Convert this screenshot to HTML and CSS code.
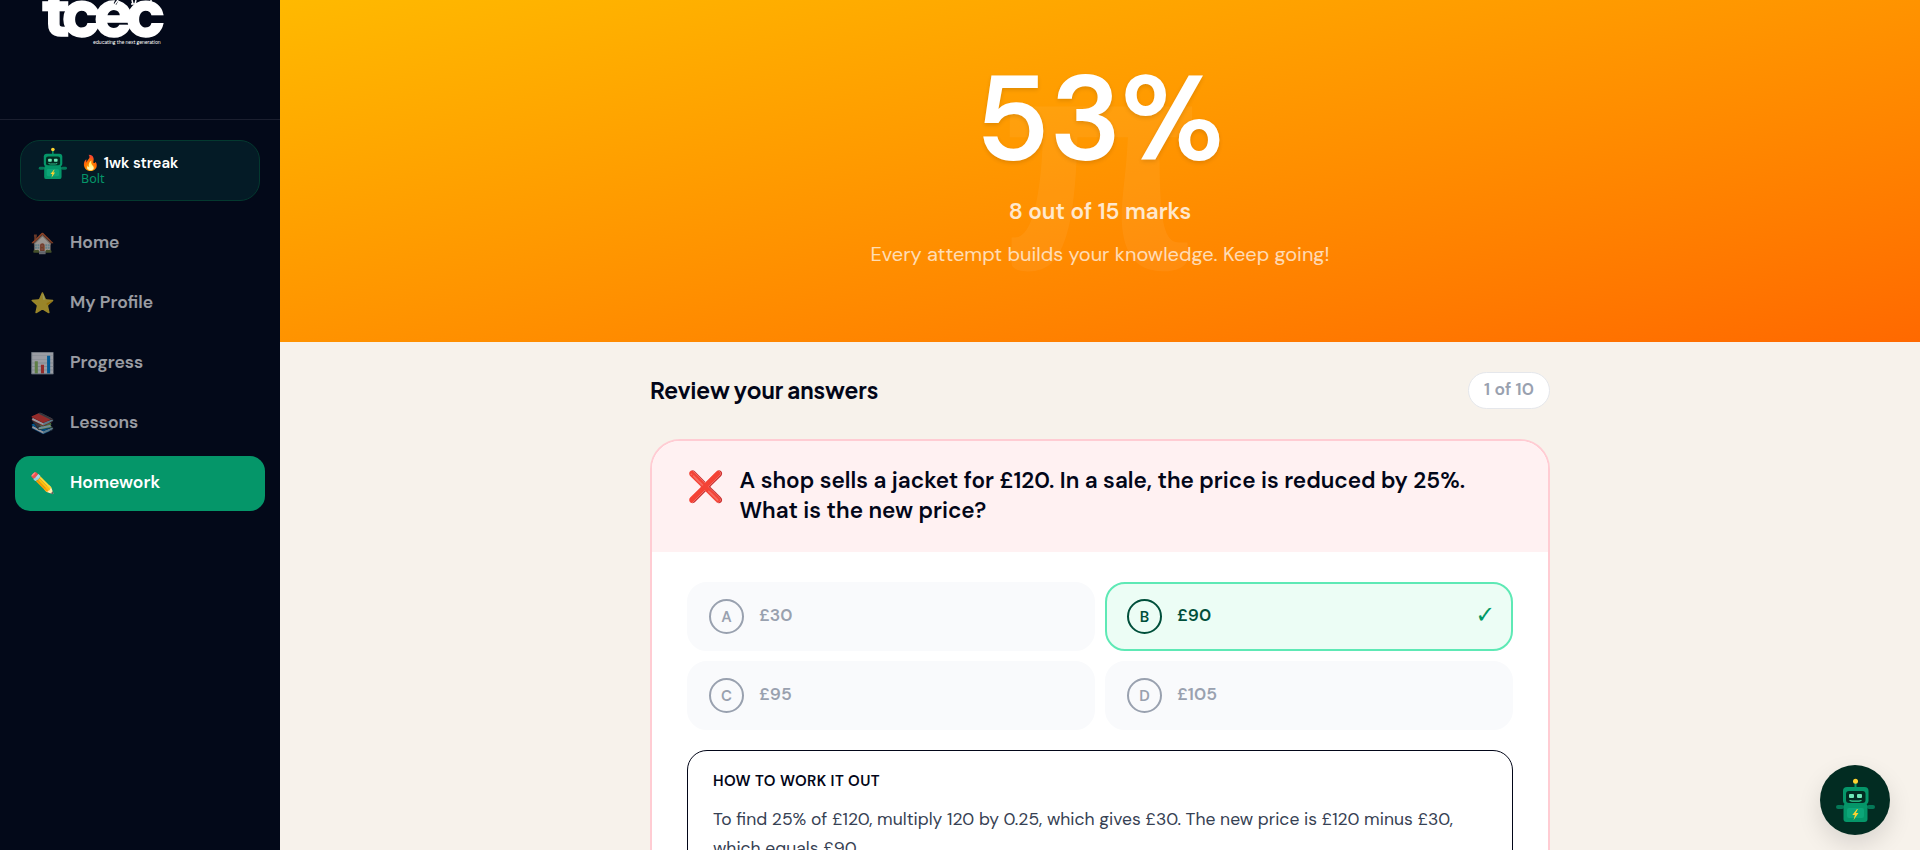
FILE: index.html
```
<!DOCTYPE html>
<html lang="en">
<head>
    <meta charset="UTF-8">
    <meta name="viewport" content="width=device-width, initial-scale=1.0">
    <title>Homework Results</title>
    <link rel="stylesheet" href="styles.css">
</head>
<body>
    <!-- Robot mascot, used in the sidebar and the chat button -->
    <svg class="sprite" width="0" height="0">
        <symbol id="robot" viewBox="0 0 40 45">
            <rect x="19.5" y="4" width="2" height="6" fill="#059669"/>
            <circle cx="20.5" cy="3.2" r="2.5" fill="#ffd230"/>
            <rect x="1" y="27" width="8" height="4" rx="2" fill="#047857"/>
            <rect x="32" y="27" width="8" height="4" rx="2" fill="#047857"/>
            <rect x="8.500" y="25.500" width="24" height="18.500" rx="3" fill="#059669"/>
            <rect x="12" y="30" width="17" height="10" rx="2" fill="#0ca678"/>
            <rect x="8" y="9" width="25.500" height="17.500" rx="4" fill="#059669"/>
            <rect x="11" y="13" width="19.500" height="12" rx="3" fill="#022c22"/>
            <rect x="14" y="16" width="5" height="4" rx="1" fill="#6ee7b7"/>
            <rect x="22" y="16" width="5" height="4" rx="1" fill="#6ee7b7"/>
            <path d="M14.500 22.500l2.500 .7h7l2.500-.7" fill="none" stroke="#34d399" stroke-width="1.2"/>
            <path d="M22 31l-4.700 6h2.600l-1.300 5 4.900-7h-2.600l2-4z" fill="#ffd230"/>
        </symbol>
    </svg>

    <div class="layout">
        <aside class="sidebar">
            <div class="logo">
                <div class="logo-word">tcec</div>
                <svg class="logo-marks" width="44" height="6">
                    <path d="M6 0l-2 4" stroke="#030919" stroke-width="3"/>
                    <path d="M7 0l-3 4M21 0l1 4M25 0l-1 4M20 4h4M40 0v2" stroke="white" stroke-width="1.500"/>
                </svg>
                <div class="logo-tag">educating the next generation</div>
            </div>
            <div class="streak">
                <svg class="streak-robot"><use href="#robot"/></svg>
                <div>
                    <div class="streak-title"><span class="flame">🔥</span> 1wk streak</div>
                    <div class="streak-name">Bolt</div>
                </div>
            </div>
            <nav class="nav">
                <a class="nav-item"><span class="nav-icon">🏠</span><span class="nav-label">Home</span></a>
                <a class="nav-item"><span class="nav-icon">⭐</span><span class="nav-label">My Profile</span></a>
                <a class="nav-item"><span class="nav-icon">📊</span><span class="nav-label">Progress</span></a>
                <a class="nav-item"><span class="nav-icon">📚</span><span class="nav-label">Lessons</span></a>
                <a class="nav-item active"><span class="nav-icon">✏️</span><span class="nav-label">Homework</span></a>
            </nav>
        </aside>

        <main class="main">
            <section class="hero">
                <div class="hero-symbol">π</div>
                <div class="score">53%</div>
                <div class="marks">8 out of 15 marks</div>
                <div class="message">Every attempt builds your knowledge. Keep going!</div>
            </section>

            <section class="review">
                <div class="review-head">
                    <h2>Review your answers</h2>
                    <span class="counter">1 of 10</span>
                </div>

                <div class="card">
                    <div class="question">
                        <span class="question-icon">❌</span>
                        <p class="question-text">A shop sells a jacket for £120. In a sale, the price is reduced by 25%. What is the new price?</p>
                    </div>
                    <div class="card-body">
                        <div class="options">
                            <div class="option"><span class="letter">A</span><span class="value">£30</span></div>
                            <div class="option correct"><span class="letter">B</span><span class="value">£90</span><span class="tick">✓</span></div>
                            <div class="option"><span class="letter">C</span><span class="value">£95</span></div>
                            <div class="option"><span class="letter">D</span><span class="value">£105</span></div>
                        </div>
                        <div class="explain">
                            <h3>How to work it out</h3>
                            <p>To find 25% of £120, multiply 120 by 0.25, which gives £30. The new price is £120 minus £30, which equals £90.</p>
                        </div>
                    </div>
                </div>
            </section>
        </main>
    </div>

    <button class="chat-button"><svg><use href="#robot"/></svg></button>
</body>
</html>
```
FILE: styles.css
```
* {
    box-sizing: border-box;
}

body {
    margin: 0;
    height: 100vh;
    overflow: hidden;
    font-family: "DM Sans", sans-serif;
    background-color: #f7f2eb;
    color: #020618;
}

h2, h3, p {
    margin: 0;
}

.sprite {
    position: absolute;
}

.layout {
    display: flex;
    height: 850px;
}

/* Sidebar */
.sidebar {
    flex: none;
    width: 280px;
    background-color: #030919;
    overflow: hidden;
}

.logo {
    position: relative;
    height: 120px;
    padding-left: 41px;
    border-bottom: 1px solid #1b1f2f;
    color: white;
}

.logo-word {
    height: 40px;
    line-height: 27px;
    font-size: 67px;
    font-weight: 900;
    letter-spacing: -9.2px;
    -webkit-text-stroke: 1.5px white;
}

.logo-marks {
    position: absolute;
    top: 0;
    left: 111px;
}

.logo-tag {
    padding-left: 52px;
    font-size: 5px;
    line-height: 6px;
    letter-spacing: -0.07px;
    white-space: nowrap;
}

.streak {
    display: flex;
    margin: 20px 20px 15px;
    height: 61px;
    padding: 6px 17px;
    border: 1px solid #04392f;
    border-radius: 20px;
    background-color: #041b26;
}

.streak-robot {
    width: 29px;
    height: 33px;
    margin-right: 14px;
}

.streak-title {
    margin-top: 6px;
    font-size: 15px;
    line-height: 20px;
    font-weight: 600;
    color: white;
}

.streak-name {
    font-family: "Noto Sans", sans-serif;
    font-size: 12.5px;
    line-height: 12px;
    color: #059669;
}

.nav {
    display: flex;
    flex-direction: column;
    gap: 5px;
    padding: 0 15px;
}

.nav-item {
    display: flex;
    align-items: center;
    gap: 15px;
    height: 55px;
    padding-left: 15px;
    border-radius: 15px;
    font-size: 17.5px;
    font-weight: 600;
    color: white;
}

.nav-icon {
    width: 25px;
    font-size: 20px;
    line-height: 24px;
    margin-top: -1px;
    opacity: 0.6;
}

.nav-label {
    margin-top: -3px;
    opacity: 0.6;
}

.active {
    background-color: #059669;
}

.active span {
    opacity: 1;
}

/* Score banner */
.main {
    flex: 1;
    overflow: hidden;
}

.hero {
    position: relative;
    height: 342px;
    padding-top: 60px;
    text-align: center;
    color: white;
    background: linear-gradient(to bottom right in oklab, #ffb900, #ff6900);
}

.hero-symbol {
    position: absolute;
    top: 0;
    left: 0;
    width: 100%;
    line-height: 292px;
    font-family: Lato, sans-serif;
    font-size: 320px;
    font-weight: 700;
    opacity: 0.05;
}

.score {
    position: relative;
    font-size: 120px;
    line-height: 118px;
    font-weight: 600;
    text-shadow: 0 2px 4px rgba(0, 0, 0, 0.12);
}

.marks {
    position: relative;
    margin-top: 19px;
    font-size: 22.5px;
    line-height: 30px;
    font-weight: 600;
    opacity: 0.8;
}

.message {
    position: relative;
    margin-top: 12px;
    font-size: 20px;
    line-height: 30px;
    opacity: 0.7;
}

/* Review */
.review {
    width: 900px;
    margin: 0 auto;
    padding-top: 30px;
}

.review-head {
    display: flex;
    justify-content: space-between;
    margin-bottom: 30px;
}

h2 {
    padding-top: 2px;
    font-family: "Plus Jakarta Sans", "DM Sans", sans-serif;
    font-size: 22.5px;
    line-height: 32px;
    font-weight: 700;
}

.counter {
    width: 82px;
    height: 37px;
    border: 1px solid #e5e7eb;
    border-radius: 19px;
    background-color: white;
    color: #99a1af;
    font-size: 17.5px;
    line-height: 33px;
    font-weight: 600;
    text-align: center;
}

.card {
    height: 600px;
    border: 2px solid #ffccd3;
    border-radius: 30px;
    background-color: white;
    overflow: hidden;
}

.question {
    display: flex;
    height: 111px;
    padding: 25px 35px;
    background-color: #fff1f2;
}

.question-icon {
    flex: none;
    width: 52.5px;
    font-size: 30px;
    line-height: 42px;
}

.question-text {
    font-size: 22.5px;
    line-height: 30px;
    font-weight: 600;
}

.card-body {
    padding: 30px 35px;
}

.options {
    display: grid;
    grid-template-columns: 1fr 1fr;
    gap: 10px;
}

.option {
    display: flex;
    align-items: center;
    gap: 15px;
    height: 69px;
    padding: 0 20px;
    border: 2px solid #f9fafc;
    border-radius: 20px;
    background-color: #f9fafc;
    color: #99a1af;
    font-size: 17.5px;
    font-weight: 600;
}

.letter {
    width: 35px;
    height: 35px;
    border: 2px solid currentColor;
    border-radius: 50%;
    font-size: 15px;
    line-height: 32px;
    text-align: center;
}

.value {
    margin-top: -3px;
}

.correct {
    border-color: #5ee9b5;
    background-color: #ecfdf5;
    color: #004f3b;
}

.tick {
    margin: 0 -1px 0 auto;
    font-family: "Noto Sans Symbols2", "Noto Sans Symbols 2", "Noto Sans Symbols", "Noto Sans Math", "Plus Jakarta Sans", sans-serif;
    font-size: 17px;
    color: #009966;
}

.explain {
    height: 200px;
    margin-top: 20px;
    padding: 18px 25px;
    border: 1px solid #020618;
    border-radius: 20px;
}

h3 {
    font-size: 15px;
    line-height: 24px;
    font-weight: 600;
    letter-spacing: 0.025em;
    text-transform: uppercase;
}

.explain p {
    margin-top: 12px;
    font-size: 17.5px;
    line-height: 29px;
    color: #364153;
}

.chat-button {
    position: absolute;
    right: 30px;
    bottom: 15px;
    width: 70px;
    height: 70px;
    padding: 12px 15px;
    border: none;
    border-radius: 50%;
    background-color: #022c22;
    box-shadow: 0 10px 25px rgba(0, 0, 0, 0.12);
}

.chat-button svg {
    display: block;
    width: 40px;
    height: 45px;
}
```
